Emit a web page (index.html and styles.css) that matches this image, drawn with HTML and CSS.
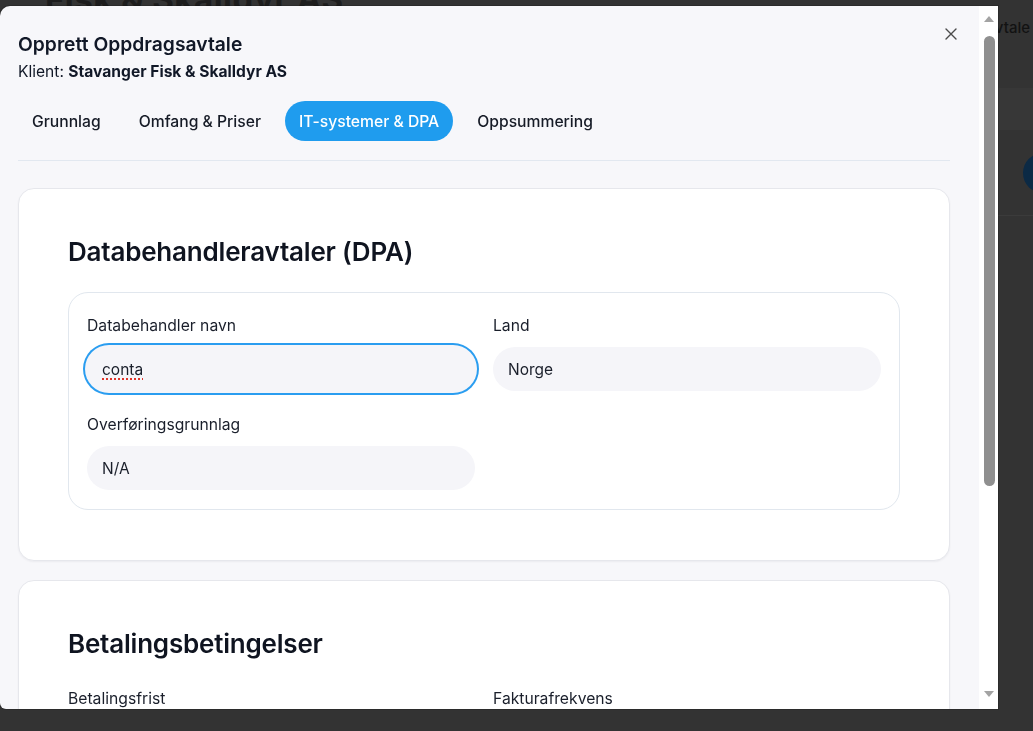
FILE: index.html
```html
<!DOCTYPE html>
<html lang="no">
<head>
<meta charset="utf-8">
<title>Opprett Oppdragsavtale</title>
<link rel="stylesheet" href="styles.css">
</head>
<body>
<div class="bg-page">
  <div class="bg-top">
    <h1 class="bg-title">Fisk &amp; Skalldyr AS</h1>
    <span class="bg-action">Ny oppdragsavtale</span>
  </div>
  <div class="bg-band"></div>
  <div class="bg-row"><span class="bg-avatar"></span></div>
</div>

<div class="modal" role="dialog">
  <div class="modal-body">
    <header class="modal-header">
      <div>
        <h2 class="modal-title">Opprett Oppdragsavtale</h2>
        <p class="modal-client">Klient: <strong>Stavanger Fisk &amp; Skalldyr AS</strong></p>
      </div>
      <button class="close-btn" aria-label="Lukk">
        <svg width="12" height="12" viewBox="0 0 12 12"><path d="M1 1 L11 11 M11 1 L1 11" stroke="#4b4b4b" stroke-width="1.4" stroke-linecap="round"/></svg>
      </button>
    </header>

    <nav class="tabs">
      <span class="tab">Grunnlag</span>
      <span class="tab">Omfang &amp; Priser</span>
      <span class="tab tab-active">IT-systemer &amp; DPA</span>
      <span class="tab">Oppsummering</span>
    </nav>

    <section class="card">
      <h3 class="card-title">Databehandleravtaler (DPA)</h3>
      <div class="dpa-box">
        <div class="grid">
          <div class="field">
            <div class="label">Databehandler navn</div>
            <div class="input input-focus"><span class="misspelled">conta</span></div>
          </div>
          <div class="field">
            <div class="label">Land</div>
            <div class="input">Norge</div>
          </div>
          <div class="field">
            <div class="label">Overføringsgrunnlag</div>
            <div class="input">N/A</div>
          </div>
        </div>
      </div>
    </section>

    <section class="card">
      <h3 class="card-title">Betalingsbetingelser</h3>
      <div class="grid grid-plain">
        <div class="field">
          <div class="label">Betalingsfrist</div>
        </div>
        <div class="field">
          <div class="label">Fakturafrekvens</div>
        </div>
      </div>
    </section>
  </div>

  <div class="scrollbar" aria-hidden="true">
    <span class="arrow-up"></span>
    <span class="thumb"></span>
    <span class="spacer"></span>
    <span class="arrow-down"></span>
  </div>
</div>
</body>
</html>
```

FILE: styles.css
```css
* { box-sizing: border-box; }

html, body {
  margin: 0;
  height: 100%;
}

body {
  background: #333333;
  font-family: Inter, "Noto Sans", "Liberation Sans", sans-serif;
  color: #111827;
  overflow: hidden;
}

/* ---------- page behind the overlay ---------- */
.bg-page {
  display: flex;
  flex-direction: column;
  height: 100%;
}

.bg-top {
  height: 88px;
  display: flex;
  justify-content: space-between;
  align-items: flex-start;
  padding: 0 3px 0 45px;
}

.bg-title {
  margin: -21px 0 0;
  font-size: 33px;
  font-weight: 700;
  color: #1d1d1d;
  letter-spacing: 0.5px;
}

.bg-action {
  margin-top: 18px;
  font-size: 15px;
  font-weight: 500;
  color: #121212;
}

.bg-band {
  height: 42px;
  background: #373737;
}

.bg-row {
  height: 86px;
  border-bottom: 1px solid #3b3b3b;
  display: flex;
  justify-content: flex-end;
  align-items: center;
}

.bg-avatar {
  width: 40px;
  height: 40px;
  border-radius: 50%;
  background: #0c2a45;
  margin-right: -30px;
}

/* ---------- modal ---------- */
.modal {
  position: fixed;
  left: 0;
  top: 6px;
  width: 998px;
  bottom: 22px;
  display: flex;
  background: #f7f7fa;
  border-radius: 10px 0 0 6px;
  overflow: hidden;
  box-shadow: 0 0 0 1px rgba(0, 0, 0, 0.15);
}

.modal-body {
  flex: 1;
  min-width: 0;
  overflow: hidden;
  padding: 25px 29px 0 18px;
}

.modal-header {
  display: flex;
  justify-content: space-between;
  align-items: flex-start;
}

.modal-title {
  margin: 0;
  font-size: 19.3px;
  line-height: 26px;
  font-weight: 600;
  color: #111827;
}

.modal-client {
  margin: 5px 0 0;
  font-size: 15.6px;
  line-height: 20px;
  color: #111827;
}

.modal-client strong {
  font-weight: 700;
}

.close-btn {
  border: 0;
  background: transparent;
  padding: 0;
  margin: -4px -8px 0 0;
  width: 14px;
  height: 14px;
  display: flex;
  align-items: center;
  justify-content: center;
  cursor: pointer;
}

/* tabs */
.tabs {
  display: flex;
  gap: 10px;
  margin-top: 19px;
  padding-bottom: 19px;
  border-bottom: 1px solid #e2e8f0;
}

.tab {
  height: 40px;
  padding: 0 14px;
  border-radius: 20px;
  display: flex;
  align-items: center;
  font-size: 15.7px;
  font-weight: 500;
  color: #161b26;
}

.tab-active {
  background: #1f9cee;
  color: #ffffff;
}

/* cards */
.card {
  background: #ffffff;
  border: 1px solid #e6e7ec;
  border-radius: 16px;
  box-shadow: 0 1px 2px rgba(16, 24, 40, 0.05);
  padding: 47px 49px 50px;
  margin-top: 27px;
}

.card + .card {
  margin-top: 19px;
}

.card-title {
  margin: 0 0 24px;
  font-size: 26px;
  line-height: 32px;
  font-weight: 600;
  color: #0f1420;
  letter-spacing: -0.2px;
}

.dpa-box {
  border: 1px solid #e1e7ee;
  border-radius: 20px;
  padding: 22px 18px 19px;
}

.grid {
  display: grid;
  grid-template-columns: 1fr 1fr;
  column-gap: 18px;
  row-gap: 23px;
}

.grid-plain {
  margin-top: 28px;
}

.label {
  font-size: 15.7px;
  line-height: 22px;
  color: #1a1f2b;
  margin-bottom: 10px;
}

.input {
  height: 44px;
  border-radius: 22px;
  background: #f5f5f9;
  padding: 0 15px;
  display: flex;
  align-items: center;
  font-size: 15.5px;
  color: #1a1f2b;
}

.input-focus {
  box-shadow: 0 0 0 2px #f5f5f9, 0 0 0 4px #2a9df0;
}

.misspelled {
  text-decoration: underline dotted #e0352b;
  text-decoration-thickness: 2px;
  text-underline-offset: 4px;
}

/* fake scrollbar */
.scrollbar {
  width: 19px;
  flex: none;
  background: #ffffff;
  display: flex;
  flex-direction: column;
  align-items: center;
  padding-left: 1px;
}

.arrow-up,
.arrow-down {
  width: 0;
  height: 0;
  border-left: 5px solid transparent;
  border-right: 5px solid transparent;
}

.arrow-up {
  margin-top: 10px;
  border-bottom: 6px solid #a3a3a3;
}

.arrow-down {
  margin-bottom: 12px;
  border-top: 6px solid #a3a3a3;
}

.thumb {
  margin-top: 14px;
  width: 11px;
  height: 450px;
  border-radius: 6px;
  background: #8f8f8f;
}

.spacer {
  flex: 1;
}
```
